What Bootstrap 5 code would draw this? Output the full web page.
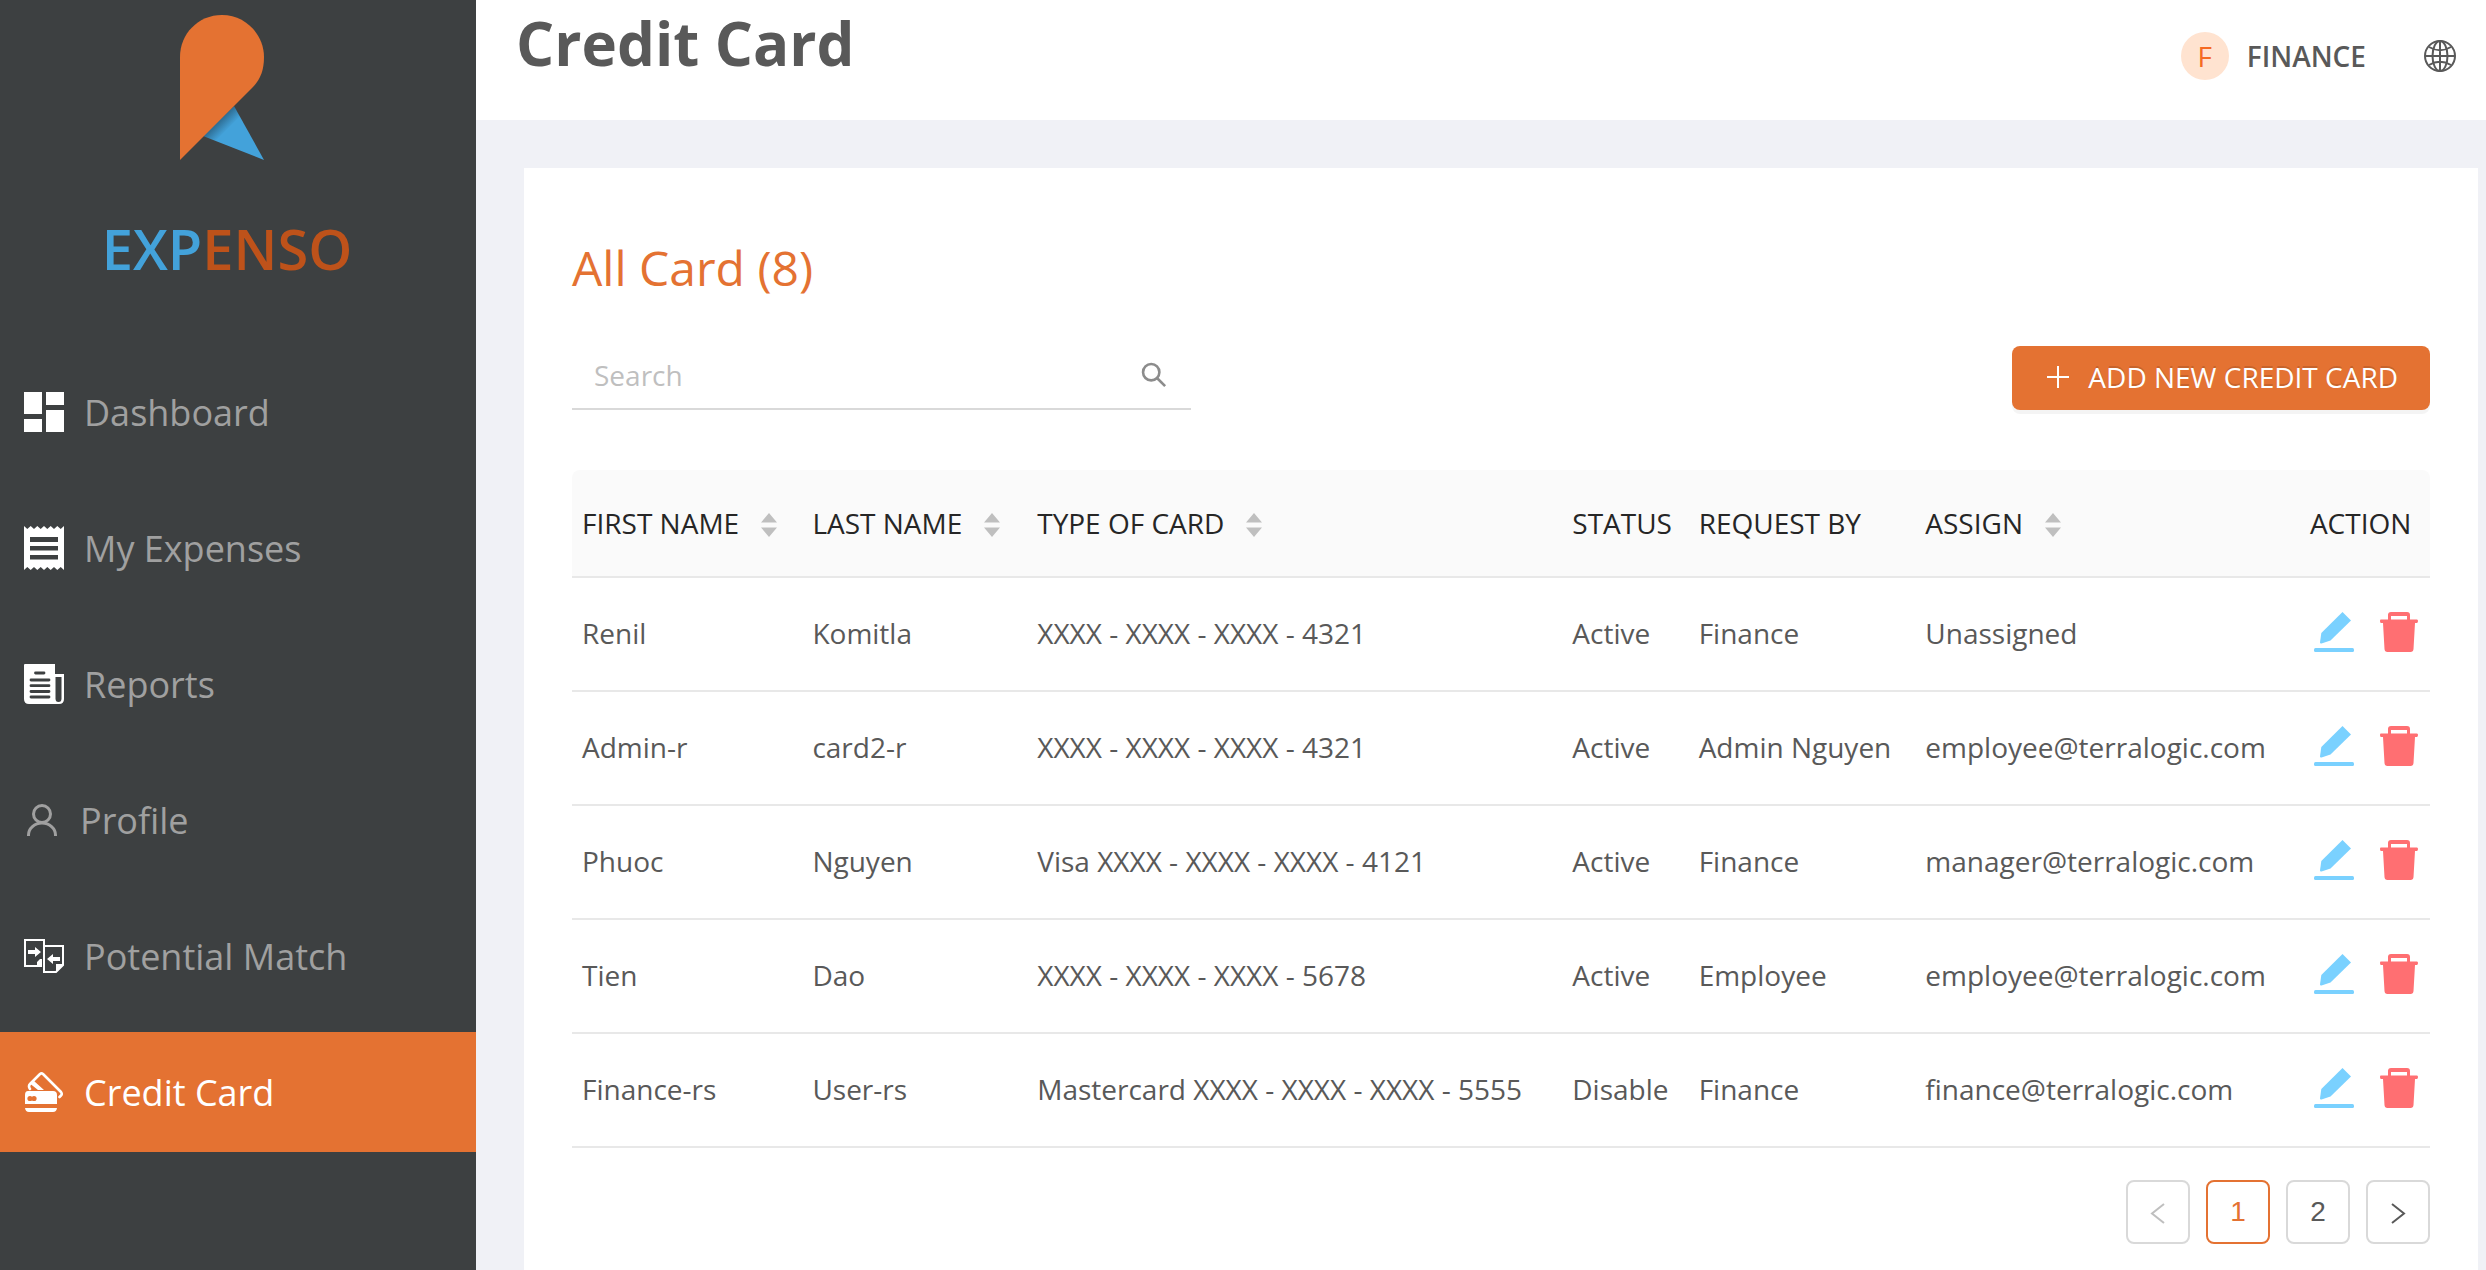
<!DOCTYPE html>
<html lang="en">
<head>
<meta charset="utf-8">
<meta name="viewport" content="width=device-width, initial-scale=1">
<title>Expenso - Credit Card</title>
<link href="https://cdn.jsdelivr.net/npm/bootstrap@5.3.0/dist/css/bootstrap.min.css" rel="stylesheet">
<style>
:root { --brand: #e47232; --ink: #595959; --side: #3d4041; }
body { font-family: "Open Sans", sans-serif; font-size: 28px; color: var(--ink); background: #f0f1f6; }
.sidebar { width: 476px; background: var(--side); }
.brand-block { height: 352px; padding-top: 15px; }
.brand-block svg { margin-right: 32px; }
.brand-name { font-size: 56px; line-height: 76px; font-weight: 600; margin-top: 50px; margin-right: 22px; color: #be521a; }
.brand-name span { color: #43a2da; }
.sidebar .nav { gap: 16px; }
.sidebar .nav-link { height: 120px; padding: 2px 24px 0; gap: 20px; font-size: 36px; color: #a0a0a0; border-radius: 0; }
.sidebar .nav-link svg { margin-bottom: 2px; }
.sidebar .nav-link.active { background: var(--brand); color: #fff; }
.sidebar .nav-link.compact { gap: 16px; }
.topbar { height: 120px; padding: 0 30px 0 40px; }
.page-title { font-size: 60px; line-height: 86px; font-weight: 700; }
.account { height: 112px; gap: 18px; font-weight: 600; }
.avatar-dot { width: 48px; height: 48px; background: #ffe3d0; color: #f56a23; font-weight: 400; }
.globe { margin-left: 40px; }
.panel { margin: 48px 8px 0 48px; padding: 66px 48px 26px; }
.panel-title { font-size: 48px; line-height: 68px; color: var(--brand); margin-bottom: 44px; font-weight: 400; }
.search-line { height: 64px; border-bottom: 2px solid #d9d9d9; padding: 0 24px 4px 20px; }
.search-line input { font-size: 28px; line-height: 38px; color: var(--ink); padding: 0 2px; }
.search-line input::placeholder { color: #bfbfbf; }
.btn-add { height: 64px; padding: 0 32px 2px; gap: 16px; font-size: 28px; border: 0; border-radius: 8px; background: var(--brand); color: #fff; box-shadow: 0 4px 0 rgba(0,0,0,.045); text-shadow: 0 -2px 0 rgba(0,0,0,.12); }
.cards-table { table-layout: fixed; margin: 60px 0 32px; color: var(--ink); line-height: 38px; border-collapse: separate; border-spacing: 0; white-space: nowrap; --bs-table-bg: transparent; }
.cards-table th, .cards-table td { padding: 0 0 0 10px; border-bottom: 2px solid #e8e8e8; color: inherit; vertical-align: middle; }
.cards-table th { height: 108px; background: #fafafa; color: #262626; font-weight: 400; }
.cards-table td { height: 114px; padding-bottom: 2px; }
.cards-table th:first-child { border-top-left-radius: 8px; }
.cards-table th:last-child { border-top-right-radius: 8px; }
.sorter { margin: 0 0 4px 22px; }
.row-tools { gap: 26px; padding: 0 4px 2px; }
.pagination { gap: 16px; }
.pagination .page-link { width: 64px; height: 64px; margin: 0; padding: 0; font-size: 28px; border: 2px solid #d9d9d9; border-radius: 8px; color: var(--ink); background: #fff; font-family: "Liberation Sans", sans-serif; }
.pagination .page-item .page-link { margin-left: 0; border-radius: 8px; }
.pagination .active .page-link { border-color: var(--brand); color: var(--brand); }
.pagination .disabled .page-link { color: #bfbfbf; }
</style>
<script src="https://cdn.jsdelivr.net/npm/bootstrap@5.3.0/dist/js/bootstrap.bundle.min.js"></script>
</head>
<body>
<svg class="d-none" aria-hidden="true">
  <symbol id="i-sort" viewBox="0 0 16 24"><path fill="#bfbfbf" d="M8 0l8 9.500H0zM8 24l8-9.500H0z"/></symbol>
  <symbol id="i-edit" viewBox="0 0 40 40"><path fill="#7ad1ff" d="M28.500 0L37 8.500 16.500 28.500 7.500 31.500Q6 31.800 6 30.500L7.300 21z"/><rect y="36" width="40" height="4" rx="1.500" fill="#7ad1ff"/></symbol>
  <symbol id="i-trash" viewBox="0 0 38 40"><path fill="#ff6f72" fill-rule="evenodd" d="M11 0H27Q30 0 30 3V7.500H37Q38 7.500 38 9T37 11H35L33.500 37Q33.300 40 30.500 40H7.500Q4.700 40 4.500 37L3 11H1Q0 11 0 9T1 7.500H8V3Q8 0 11 0zM11 4V7.500H27V4z"/></symbol>
</svg>
<div class="d-flex min-vh-100">
  <aside class="sidebar flex-shrink-0">
    <div class="brand-block d-flex flex-column align-items-center">
      <svg width="84" height="145" viewBox="0 0 84 145">
        <defs><linearGradient id="fold" gradientUnits="userSpaceOnUse" x1="39" y1="107" x2="47" y2="115"><stop offset="0" stop-color="#2f6f96"/><stop offset="1" stop-color="#43a2da"/></linearGradient></defs>
        <path fill="url(#fold)" d="M54 91L84 145 23 121z"/>
        <path fill="#e47232" d="M0 42C0 19 18 0 42 0S84 20 84 42C84 56 80 65 72 73L0 145z"/>
      </svg>
      <div class="brand-name"><span>EXP</span>ENSO</div>
    </div>
    <nav class="nav nav-pills flex-column">
      <a class="nav-link d-flex align-items-center" href="#">
        <svg width="40" height="40" viewBox="0 0 40 40" fill="#fff"><path d="M0 0H18V22H0zM22 0H40V13H22zM0 27H18V40H0zM22 18H40V40H22z"/></svg>Dashboard</a>
      <a class="nav-link d-flex align-items-center" href="#">
        <svg width="40" height="44" viewBox="0 0 40 44"><path fill="#fff" fill-rule="evenodd" d="M0 0L3.300 3 6.700 0 10 3 13.300 0 16.700 3 20 0 23.300 3 26.700 0 30 3 33.300 0 36.700 3 40 0V44L36.700 41 33.300 44 30 41 26.700 44 23.300 41 20 44 16.700 41 13.300 44 10 41 6.700 44 3.300 41 0 44zM6 11V16H34V11zM6 20V24.500H34V20zM6 29V33.500H34V29z"/></svg>My Expenses</a>
      <a class="nav-link d-flex align-items-center" href="#">
        <svg width="40" height="40" viewBox="0 0 40 40"><path fill="#fff" d="M1 0H31V10H40V35Q40 40 35 40H5Q0 40 0 35V1Q0 0 1 0z"/><path fill="none" stroke="#3d4041" stroke-width="2.800" stroke-linecap="round" d="M11.500 9H20M7 16H25M7 21.700H25M7 27.500H25M7 33H25"/><path fill="#3d4041" d="M31.500 13H37.500V34.500Q37.500 38 34.500 38T31.500 34.500z"/></svg>Reports</a>
      <a class="nav-link compact d-flex align-items-center" href="#">
        <svg width="40" height="40" viewBox="0 0 40 40" fill="none" stroke="#a0a0a0" stroke-width="3"><circle cx="18" cy="14" r="8.500"/><path d="M4.500 36V35A13.500 12 0 0 1 31.500 35V36"/></svg>Profile</a>
      <a class="nav-link d-flex align-items-center" href="#">
        <svg width="40" height="34" viewBox="0 0 40 34"><path fill="none" stroke="#fff" stroke-width="2" d="M18 27H1V1H20V6M20 7H39V26L32 33H20z"/><path fill="#fff" d="M4 11H11V8L17 13 11 18V15H4zM36 18H29V15L23 20 29 25V22H36zM18 20V28H13V23L16 20zM39 26L32 33V25H39z"/></svg>Potential Match</a>
      <a class="nav-link active d-flex align-items-center" href="#" aria-current="page">
        <svg width="40" height="40" viewBox="0 0 40 40"><path fill="none" stroke="#fff" stroke-width="2.600" stroke-linejoin="round" stroke-linecap="round" d="M6 17Q4 14 6 12L16 2Q17.500 .8 19 2L37 20Q38.500 22 37 23.500L35.500 25"/><path fill="#fff" d="M10 9L20 18H14L6.500 12zM4 19H29Q33 19 33 23V32H1V23Q1 19 4 19zM1 36H33Q32.500 40 29 40H5Q1.500 40 1 36z"/><circle cx="6" cy="26.500" r="2.600" fill="#e47232"/><circle cx="10" cy="26.500" r="2.600" fill="#e47232"/></svg>Credit Card</a>
    </nav>
  </aside>

  <div class="flex-grow-1 d-flex flex-column">
    <header class="topbar bg-white d-flex justify-content-between align-items-start">
      <h1 class="page-title m-0">Credit Card</h1>
      <div class="account d-flex align-items-center">
        <span class="avatar-dot rounded-circle d-flex align-items-center justify-content-center">F</span>
        <span>FINANCE</span>
        <button class="globe btn p-0 border-0 d-flex" type="button" aria-label="Language">
          <svg width="32" height="32" viewBox="0 0 32 32" fill="none" stroke="#595959" stroke-width="2"><circle cx="16" cy="16" r="15"/><ellipse cx="16" cy="16" rx="7.500" ry="15"/><path d="M16 1V31M1 16H31M5 7Q16 13.500 27 7M5 25Q16 18.500 27 25"/></svg>
        </button>
      </div>
    </header>

    <main class="panel bg-white flex-grow-1">
      <h2 class="panel-title">All Card (8)</h2>
      <div class="row g-0 justify-content-between">
        <div class="col-4 search-line d-flex align-items-center">
          <input class="form-control border-0 shadow-none bg-transparent" type="text" placeholder="Search" aria-label="Search">
          <svg class="flex-shrink-0" width="26" height="26" viewBox="0 0 28 28" fill="none" stroke="#8c8c8c" stroke-width="2.800"><circle cx="11" cy="11" r="8.800"/><path d="M17.500 17.500L26 26"/></svg>
        </div>
        <button class="btn btn-add col-auto d-flex align-items-center" type="button">
          <svg width="28" height="28" viewBox="0 0 28 28" stroke="#fff" stroke-width="2"><path d="M14 3V25M3 14H25"/></svg>ADD NEW CREDIT CARD</button>
      </div>

      <table class="table cards-table">
        <colgroup><col style="width:12.4%"><col style="width:12.1%"><col style="width:28.8%"><col style="width:6.8%"><col style="width:12.2%"><col style="width:20.7%"><col style="width:7%"></colgroup>
        <thead>
          <tr>
            <th scope="col">FIRST NAME<svg class="sorter" width="16" height="24"><use href="#i-sort"/></svg></th>
            <th scope="col">LAST NAME<svg class="sorter" width="16" height="24"><use href="#i-sort"/></svg></th>
            <th scope="col">TYPE OF CARD<svg class="sorter" width="16" height="24"><use href="#i-sort"/></svg></th>
            <th scope="col">STATUS</th>
            <th scope="col">REQUEST BY</th>
            <th scope="col">ASSIGN<svg class="sorter" width="16" height="24"><use href="#i-sort"/></svg></th>
            <th scope="col">ACTION</th>
          </tr>
        </thead>
        <tbody>
          <tr><td>Renil</td><td>Komitla</td><td>XXXX - XXXX - XXXX - 4321</td><td>Active</td><td>Finance</td><td>Unassigned</td>
            <td><div class="row-tools d-flex"><button class="btn p-0 border-0 d-flex" type="button" aria-label="Edit"><svg width="40" height="40"><use href="#i-edit"/></svg></button><button class="btn p-0 border-0 d-flex" type="button" aria-label="Delete"><svg width="38" height="40"><use href="#i-trash"/></svg></button></div></td></tr>
          <tr><td>Admin-r</td><td>card2-r</td><td>XXXX - XXXX - XXXX - 4321</td><td>Active</td><td>Admin Nguyen</td><td>employee@terralogic.com</td>
            <td><div class="row-tools d-flex"><button class="btn p-0 border-0 d-flex" type="button" aria-label="Edit"><svg width="40" height="40"><use href="#i-edit"/></svg></button><button class="btn p-0 border-0 d-flex" type="button" aria-label="Delete"><svg width="38" height="40"><use href="#i-trash"/></svg></button></div></td></tr>
          <tr><td>Phuoc</td><td>Nguyen</td><td>Visa XXXX - XXXX - XXXX - 4121</td><td>Active</td><td>Finance</td><td>manager@terralogic.com</td>
            <td><div class="row-tools d-flex"><button class="btn p-0 border-0 d-flex" type="button" aria-label="Edit"><svg width="40" height="40"><use href="#i-edit"/></svg></button><button class="btn p-0 border-0 d-flex" type="button" aria-label="Delete"><svg width="38" height="40"><use href="#i-trash"/></svg></button></div></td></tr>
          <tr><td>Tien</td><td>Dao</td><td>XXXX - XXXX - XXXX - 5678</td><td>Active</td><td>Employee</td><td>employee@terralogic.com</td>
            <td><div class="row-tools d-flex"><button class="btn p-0 border-0 d-flex" type="button" aria-label="Edit"><svg width="40" height="40"><use href="#i-edit"/></svg></button><button class="btn p-0 border-0 d-flex" type="button" aria-label="Delete"><svg width="38" height="40"><use href="#i-trash"/></svg></button></div></td></tr>
          <tr><td>Finance-rs</td><td>User-rs</td><td>Mastercard XXXX - XXXX - XXXX - 5555</td><td>Disable</td><td>Finance</td><td>finance@terralogic.com</td>
            <td><div class="row-tools d-flex"><button class="btn p-0 border-0 d-flex" type="button" aria-label="Edit"><svg width="40" height="40"><use href="#i-edit"/></svg></button><button class="btn p-0 border-0 d-flex" type="button" aria-label="Delete"><svg width="38" height="40"><use href="#i-trash"/></svg></button></div></td></tr>
        </tbody>
      </table>

      <nav aria-label="Pages">
        <ul class="pagination justify-content-end m-0">
          <li class="page-item disabled"><a class="page-link d-flex align-items-center justify-content-center" href="#" aria-label="Previous"><svg width="24" height="24" viewBox="0 0 24 24" fill="none" stroke="currentColor" stroke-width="2"><path d="M18 4L6 13.500 18 23"/></svg></a></li>
          <li class="page-item active"><a class="page-link d-flex align-items-center justify-content-center" href="#" aria-current="page">1</a></li>
          <li class="page-item"><a class="page-link d-flex align-items-center justify-content-center" href="#">2</a></li>
          <li class="page-item"><a class="page-link d-flex align-items-center justify-content-center" href="#" aria-label="Next"><svg width="24" height="24" viewBox="0 0 24 24" fill="none" stroke="currentColor" stroke-width="2"><path d="M6 4L18 13.500 6 23"/></svg></a></li>
        </ul>
      </nav>
    </main>
  </div>
</div>
</body>
</html>
